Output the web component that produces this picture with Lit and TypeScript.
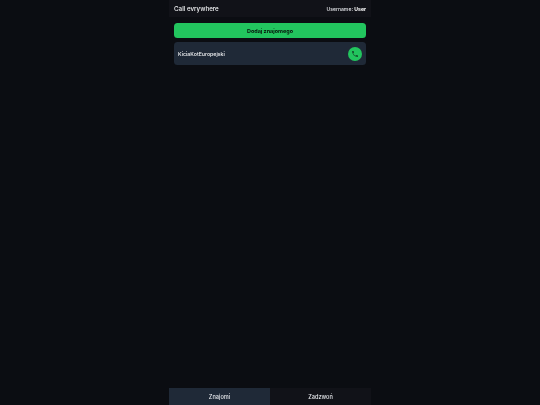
import { LitElement, html, css } from "lit";
import { customElement } from "lit/decorators.js";

@customElement("app-root")
export class AppRoot extends LitElement {
  static styles = css`
    :host { display: block; height: 405px; background: #0b0d12; font-family: Inter, "Liberation Sans", sans-serif; color: #e5e7eb; overflow: hidden; }
    .shell { width: 202px; height: 405px; margin: 0 auto; display: flex; flex-direction: column; }
    .top { height: 17px; flex: none; background: #111218; display: flex; align-items: center; justify-content: space-between; padding: 0 5px; }
    .title, .user, .label, .name { will-change: opacity; }
    .title { font-size: 6.25px; font-weight: 500; color: #f3f4f6; }
    .user { font-size: 5.1px; font-weight: 500; color: #e5e7eb; }
    .user b { color: #ffffff; font-weight: 700; }
    .main { flex: 1; padding: 6px 5px; display: flex; flex-direction: column; gap: 4px; }
    .add { height: 15px; border: 0; border-radius: 3.5px; background: #22c55e; color: #07120b; font: 700 5.45px Inter, "Liberation Sans", sans-serif; padding: 0; }
    .row { height: 23px; border-radius: 3.5px; background: #1f2937; display: flex; align-items: center; justify-content: space-between; padding: 0 4px; }
    .name { font-size: 5.25px; font-weight: 500; color: #f3f4f6; }
    .call { width: 14px; height: 14px; border-radius: 50%; border: 0; padding: 0; background: #22c55e; display: flex; align-items: center; justify-content: center; }
    .call svg { width: 8px; height: 8px; display: block; }
    .tabs { height: 17px; flex: none; display: grid; grid-template-columns: 1fr 1fr; background: #111218; }
    .tab { display: flex; align-items: center; justify-content: center; font-size: 5.6px; font-weight: 500; color: #e5e7eb; }
    .tab.on { background: #1f2937; }
  `;
  render() {
    return html`<div class="shell">
      <header class="top">
        <span class="title">Call evrywhere</span>
        <span class="user">Username: <b>User</b></span>
      </header>
      <main class="main">
        <button class="add"><span class="label">Dodaj znajomego</span></button>
        <div class="row">
          <span class="name">KiciaKotEuropejski</span>
          <button class="call"><svg viewBox="0 0 24 24" fill="#14532d"><path d="M6.6 10.8a15.1 15.1 0 0 0 6.6 6.6l2.2-2.2a1 1 0 0 1 1-.25 11.4 11.4 0 0 0 3.6.57 1 1 0 0 1 1 1V20a1 1 0 0 1-1 1A17 17 0 0 1 3 4a1 1 0 0 1 1-1h3.5a1 1 0 0 1 1 1c0 1.25.2 2.45.57 3.57a1 1 0 0 1-.25 1z"/></svg></button>
        </div>
      </main>
      <nav class="tabs">
        <div class="tab on"><span class="label">Znajomi</span></div>
        <div class="tab"><span class="label">Zadzwoń</span></div>
      </nav>
    </div>`;
  }
}
